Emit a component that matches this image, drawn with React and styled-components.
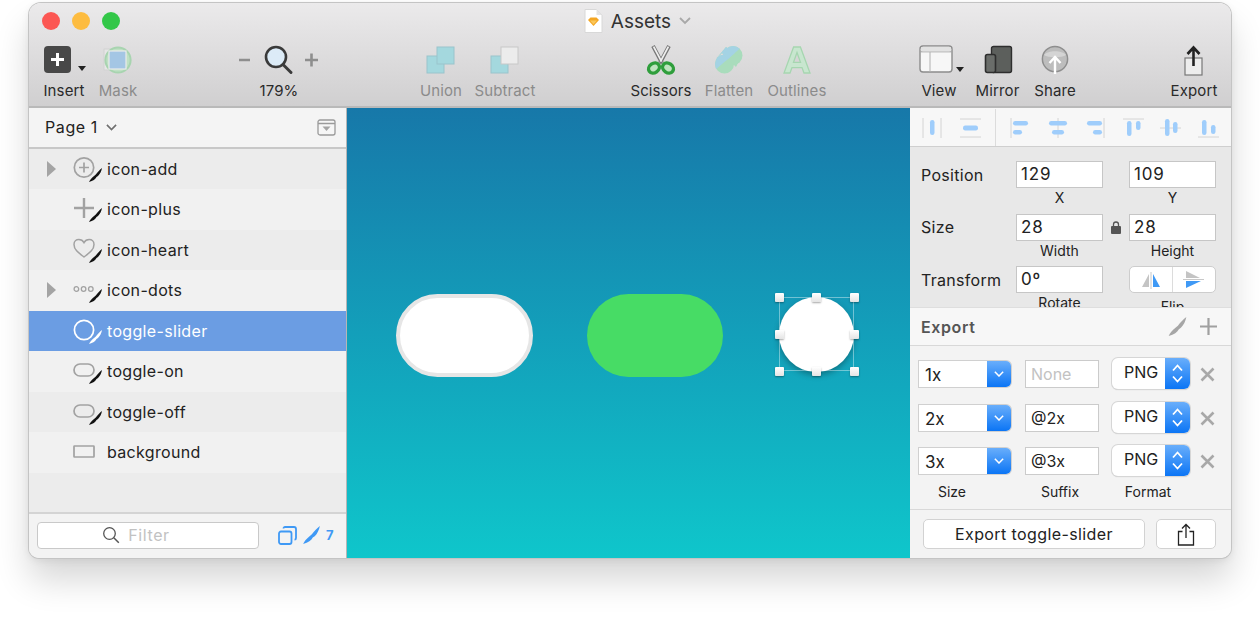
import React from 'react';
import styled, { createGlobalStyle } from 'styled-components';

const UI_FONT = `Inter, 'Noto Sans', 'Liberation Sans', sans-serif`;

const GlobalStyle = createGlobalStyle`
  html, body {
    margin: 0;
    background: #fff;
    font-family: ${UI_FONT};
    font-size: 15.5px;
    color: #222;
    overflow: hidden;
  }
  * { box-sizing: border-box; }
  svg { display: block; }
`;

const Knife = ({ x = 0, y = 0, color = '#111' }) => (
  <path
    transform={`translate(${x} ${y})`}
    fill={color}
    stroke="none"
    d="M13 0C12.500 3 11 6 9 8L7.500 9C6.500 11 4 13 0 14 1 12 2.500 10 5 8L6.800 6.500C8.500 4 11 1.500 13 0Z"
  />
);

const LayerIcon = ({ kind, selected }) => {
  const stroke = selected ? '#fff' : '#a2a2a2';
  return (
    <svg width="30" height="28" viewBox="0 0 30 28" fill="none" stroke={stroke}>
      {kind === 'add' && (
        <g strokeWidth="1.7">
          <circle cx="11" cy="12.500" r="9.700" />
          <path d="M11 7.500v10M6 12.500h10" />
        </g>
      )}
      {kind === 'plus' && <path strokeWidth="2.400" d="M11 3v20M1 13h20" />}
      {kind === 'heart' && (
        <path
          strokeWidth="1.500"
          d="M11 21C6 17.200 1 14 1 8.400 1 5.400 3.200 3.600 5.800 3.600 8 3.600 10 4.800 11 6.600 12 4.800 14 3.600 16.200 3.600 18.800 3.600 21 5.400 21 8.400 21 14 16 17.200 11 21Z"
        />
      )}
      {kind === 'dots' && (
        <g strokeWidth="1.300">
          <circle cx="3.400" cy="13" r="2.300" />
          <circle cx="10.600" cy="13" r="2.300" />
          <circle cx="17.800" cy="13" r="2.300" />
        </g>
      )}
      {kind === 'slider' && <circle strokeWidth="1.700" cx="11" cy="13" r="9.600" />}
      {kind === 'toggle' && <rect strokeWidth="1.700" x="1" y="7" width="20" height="12" rx="6" />}
      {kind === 'rect' && <rect strokeWidth="1.700" x="1" y="8" width="20" height="11" rx="0.500" />}
      {kind !== 'rect' && <Knife x={16} y={13} color={selected ? '#fff' : '#111'} />}
    </svg>
  );
};

const InsertIcon = () => (
  <svg width="44" height="30" viewBox="0 0 44 30">
    <rect x="2" y="1" width="27" height="27" rx="4" fill="#484848" />
    <path d="M15.500 8v13M9 14.500h13" stroke="#fff" strokeWidth="3" />
    <path d="M36 21h8l-4 5z" fill="#222" />
  </svg>
);

const MaskIcon = () => (
  <svg width="30" height="30" viewBox="0 0 30 30">
    <rect x="1" y="4" width="21" height="21" fill="#e6e6e6" stroke="#d2d2d2" />
    <circle cx="15" cy="15" r="12.600" fill="#bfe0c4" stroke="#a8d4b0" strokeWidth="2" />
    <rect x="6" y="6" width="17" height="18" fill="#a4c6e4" stroke="#ececec" strokeWidth="1.200" />
  </svg>
);

const ZoomIcon = () => (
  <svg width="80" height="30" viewBox="0 0 80 30">
    <path d="M1 15h11M67 15h13M73.500 8.500v13" stroke="#8e8e8e" strokeWidth="2.600" transform="translate(-1 0)" />
    <circle cx="37" cy="12" r="10" fill="#dcebf7" stroke="#3a3a3a" strokeWidth="2.600" />
    <path d="M44 19.500l8 8" stroke="#3a3a3a" strokeWidth="3" strokeLinecap="round" />
  </svg>
);

const UnionIcon = ({ subtract }) => (
  <svg width="30" height="30" viewBox="0 0 30 30">
    <rect x="1" y="11" width="17" height="17" fill="#a4d8de" stroke="#9ac4cc" />
    <rect
      x="11"
      y="2"
      width="17"
      height="17"
      fill={subtract ? '#ececec' : '#a4d8de'}
      stroke={subtract ? '#c8c8c8' : '#9ac4cc'}
    />
  </svg>
);

const ScissorsIcon = () => (
  <svg width="30" height="30" viewBox="0 0 30 30" fill="none">
    <path d="M7 1l9 17M23 1l-9 17" stroke="#777" strokeWidth="3.800" />
    <path d="M7.600 1.600l8 15M22.400 1.600l-8 15" stroke="#eee" strokeWidth="1.800" />
    <ellipse cx="8" cy="23" rx="5.800" ry="4.600" stroke="#2f9e3c" strokeWidth="3.400" fill="#bfe3bf" transform="rotate(-35 8 23)" />
    <ellipse cx="22" cy="23" rx="5.800" ry="4.600" stroke="#2f9e3c" strokeWidth="3.400" fill="#bfe3bf" transform="rotate(35 22 23)" />
  </svg>
);

const FlattenIcon = () => (
  <svg width="30" height="30" viewBox="0 0 30 30">
    <defs>
      <clipPath id="flatten-top">
        <path d="M0 0h30L0 26Z" />
      </clipPath>
    </defs>
    <g fill="#a9dcbc">
      <circle cx="19" cy="10.500" r="9.500" />
      <circle cx="10.500" cy="19" r="9.500" />
      <path d="M8 8l14 14 5-10L12 2 2 14Z" />
    </g>
    <g fill="#a4d3e4" clipPath="url(#flatten-top)">
      <circle cx="19" cy="10.500" r="9.500" />
      <circle cx="10.500" cy="19" r="9.500" />
      <path d="M8 8l14 14 5-10L12 2 2 14Z" />
    </g>
  </svg>
);

const OutlinesIcon = () => (
  <svg width="30" height="30" viewBox="0 0 30 30" fill="#c8e6cf" stroke="#a6d6b0" strokeWidth="1.300">
    <path d="M11.600 2h6.800L28 28h-6l-2-5.400H10L8 28H2Z" />
    <path d="M11.500 17.400h7L15 7.500Z" fill="#d6d5d6" />
  </svg>
);

const ViewIcon = () => (
  <svg width="50" height="30" viewBox="0 0 50 30">
    <rect x="6" y="1" width="32" height="26" rx="3" fill="#f7f7f7" stroke="#8c8c8c" strokeWidth="1.400" />
    <path d="M6.500 6.800h31" stroke="#999" />
    <path d="M16 7v20" stroke="#b0b0b0" />
    <rect x="6.800" y="1.800" width="30.400" height="4.600" rx="2" fill="#e2e2e2" />
    <path d="M42 22h8l-4 5z" fill="#222" />
  </svg>
);

const MirrorIcon = () => (
  <svg width="30" height="30" viewBox="0 0 30 30">
    <rect x="8.500" y="1.500" width="20" height="26" rx="2" fill="#5c5f5c" stroke="#2e2e2e" strokeWidth="1.400" />
    <rect x="2.500" y="9.500" width="10" height="18" rx="2" fill="#6a6d6a" stroke="#2e2e2e" strokeWidth="1.600" />
  </svg>
);

const ShareIcon = () => (
  <svg width="30" height="30" viewBox="0 0 30 30">
    <circle cx="15" cy="14" r="12.600" fill="#bdbdbd" stroke="#8e8e8e" strokeWidth="1.500" />
    <path d="M4 10c4-5 18-5 22 0-4 3-18 3-22 0Z" fill="#d4d4d4" />
    <path d="M15 29V13M9.500 18l5.500-6 5.500 6" stroke="#fff" strokeWidth="2.400" fill="none" />
  </svg>
);

const ExportIcon = () => (
  <svg width="30" height="32" viewBox="0 0 30 32">
    <rect x="6" y="13" width="17" height="17" fill="#ededed" stroke="#777" strokeWidth="1.200" />
    <path d="M14.500 21V3M8.500 9l6-6.500 6 6.500" stroke="#222" strokeWidth="2.600" fill="none" />
  </svg>
);

const DocIcon = () => (
  <svg width="19" height="24" viewBox="0 0 19 24">
    <path d="M1 .5h11.500L18 6v17.500H1Z" fill="#fff" stroke="#d8d8d8" />
    <path d="M12.500 .5V6H18Z" fill="#e4e4e4" />
    <path d="M4 11l2.500-2.500h6L15 11l-5.500 6Z" fill="#f4a623" />
    <path d="M6 11.500h7l-3.500 4Z" fill="#fac75a" />
  </svg>
);

const Chevron = ({ color = '#777', size = 12, weight = 1.800 }) => (
  <svg width={size} height={size * 0.6} viewBox="0 0 12 7.200" fill="none">
    <path d="M1 1l5 5 5-5" stroke={color} strokeWidth={weight} />
  </svg>
);

const ALIGN_ICONS = [
  { lines: ['M1 1v20', 'M19 1v20'], pills: [[8, 3, 4.500, 15]] },
  { lines: ['M0 2h21', 'M0 20h21'], pills: [[3, 8.500, 15, 5]] },
  { lines: ['M1 1v20'], pills: [[3, 4, 15, 4.500], [3, 13, 9, 4.500]] },
  { lines: ['M10 1v20'], pills: [[1, 4, 18, 4.500], [4, 13, 12, 4.500]] },
  { lines: ['M19 1v20'], pills: [[2, 4, 15, 4.500], [8, 13, 9, 4.500]] },
  { lines: ['M0 2h21'], pills: [[4, 4, 4.500, 15], [13, 4, 4.500, 9]] },
  { lines: ['M0 11h21'], pills: [[5, 2, 4.500, 17], [13, 5, 4.500, 11]] },
  { lines: ['M0 20h21'], pills: [[4, 3, 4.500, 15], [13, 8, 4.500, 9]] },
];

const AlignIcon = ({ lines, pills }) => (
  <svg width="21" height="22" viewBox="0 0 21 22">
    {lines.map((d) => (
      <path key={d} d={d} stroke="#d4d4d4" strokeWidth="1" fill="none" />
    ))}
    {pills.map(([x, y, w, h]) => (
      <rect key={`${x}-${y}`} x={x} y={y} width={w} height={h} rx="2.200" fill="#9fcdfb" />
    ))}
  </svg>
);

const LAYERS = [
  { name: 'icon-add', icon: 'add', open: true },
  { name: 'icon-plus', icon: 'plus' },
  { name: 'icon-heart', icon: 'heart' },
  { name: 'icon-dots', icon: 'dots', open: true },
  { name: 'toggle-slider', icon: 'slider', selected: true },
  { name: 'toggle-on', icon: 'toggle' },
  { name: 'toggle-off', icon: 'toggle' },
  { name: 'background', icon: 'rect' },
];

const EXPORTS = [
  { size: '1x', suffix: 'None', empty: true },
  { size: '2x', suffix: '@2x' },
  { size: '3x', suffix: '@3x' },
];

const HANDLES = [
  [0, 0], [37, 0], [75, 0],
  [0, 37], [75, 37],
  [0, 74], [37, 74], [75, 74],
];

function Tool({ width, label, dim, icon }) {
  return (
    <ToolItem $width={width}>
      <ToolIcon>{icon}</ToolIcon>
      <ToolLabel $dim={dim}>{label}</ToolLabel>
    </ToolItem>
  );
}

export default function App() {
  return (
    <Page>
      <GlobalStyle />
      <Window>
        <Toolbar>
          <TitleBar>
            <Lights>
              <Light $color="#fc5753" />
              <Light $color="#fdbc40" />
              <Light $color="#33c748" />
            </Lights>
            <Title>
              <DocIcon />
              <TitleText>Assets</TitleText>
              <Chevron color="#a8a8a8" />
            </Title>
          </TitleBar>
          <Tools>
            <ToolGroup $left={8}>
              <Tool width={54} label="Insert" icon={<InsertIcon />} />
              <Tool width={54} label="Mask" dim icon={<MaskIcon />} />
            </ToolGroup>
            <ToolGroup $left={94}>
              <Tool width={80} label="179%" icon={<ZoomIcon />} />
            </ToolGroup>
            <ToolGroup $left={90}>
              <Tool width={64} label="Union" dim icon={<UnionIcon />} />
              <Tool width={64} label="Subtract" dim icon={<UnionIcon subtract />} />
            </ToolGroup>
            <ToolGroup $left={90}>
              <Tool width={68} label="Scissors" icon={<ScissorsIcon />} />
              <Tool width={68} label="Flatten" dim icon={<FlattenIcon />} />
              <Tool width={68} label="Outlines" dim icon={<OutlinesIcon />} />
            </ToolGroup>
            <ToolGroup $left={79}>
              <Tool width={58} label="View" icon={<ViewIcon />} />
              <Tool width={59} label="Mirror" icon={<MirrorIcon />} />
              <Tool width={56} label="Share" icon={<ShareIcon />} />
            </ToolGroup>
            <ToolGroup $left={79}>
              <Tool width={64} label="Export" icon={<ExportIcon />} />
            </ToolGroup>
          </Tools>
        </Toolbar>

        <Body>
          <LeftPanel>
            <PageHeader>
              <PageName>Page 1</PageName>
              <Chevron color="#6f6f6f" size={11} />
              <PageToggle>
                <svg width="19" height="17" viewBox="0 0 19 17">
                  <rect x="1" y="1" width="17" height="15" rx="2" fill="#f6f6f6" stroke="#9a9a9a" strokeWidth="1.300" />
                  <path d="M1 4.500h17" stroke="#9a9a9a" strokeWidth="1.600" />
                  <path d="M5.500 7.500h8l-4 4.500z" fill="#a4a4a4" />
                </svg>
              </PageToggle>
            </PageHeader>
            <LayerList>
              {LAYERS.map((layer) => (
                <LayerRow key={layer.name} $selected={layer.selected}>
                  <Disclosure $show={layer.open} />
                  <LayerIcon kind={layer.icon} selected={layer.selected} />
                  <span>{layer.name}</span>
                </LayerRow>
              ))}
            </LayerList>
            <FilterBar>
              <FilterInput>
                <svg width="18" height="18" viewBox="0 0 18 18" fill="none">
                  <circle cx="7.500" cy="7.500" r="5.800" stroke="#555" strokeWidth="1.300" />
                  <path d="M11.800 11.800l5 5" stroke="#555" strokeWidth="1.500" />
                </svg>
                <span>Filter</span>
              </FilterInput>
              <FilterIcons>
                <svg width="19" height="19" viewBox="0 0 19 19" fill="none" stroke="#3f99f5" strokeWidth="1.800">
                  <rect x="1" y="5.500" width="12.500" height="12.500" rx="2" />
                  <path d="M5.500 2.500C5.500 1.500 6.200 1 7 1h9c1 0 2 .8 2 2v9c0 1-.6 1.600-1.500 1.600" />
                </svg>
                <svg width="19" height="18" viewBox="0 0 13 14">
                  <Knife color="#3f99f5" />
                </svg>
                <CountText>7</CountText>
              </FilterIcons>
            </FilterBar>
          </LeftPanel>

          <Canvas>
            <ToggleOff />
            <ToggleOn />
            <Knob />
            <Selection>
              {HANDLES.map(([x, y]) => (
                <Handle key={`${x}-${y}`} style={{ left: x, top: y }} />
              ))}
            </Selection>
          </Canvas>

          <RightPanel>
            <AlignBar>
              <AlignGroup $width={85} $gap={17}>
                {ALIGN_ICONS.slice(0, 2).map((icon) => (
                  <AlignIcon key={icon.lines[0]} {...icon} />
                ))}
              </AlignGroup>
              <AlignGroup $width={235} $gap={16.500} $divided>
                {ALIGN_ICONS.slice(2).map((icon) => (
                  <AlignIcon key={icon.lines[0]} {...icon} />
                ))}
              </AlignGroup>
            </AlignBar>

            <Props>
              <PropRow>
                <PropLabel>Position</PropLabel>
                <ValueInput>129</ValueInput>
                <span />
                <ValueInput>109</ValueInput>
                <span />
                <Caption>X</Caption>
                <span />
                <Caption>Y</Caption>
              </PropRow>
              <PropRow>
                <PropLabel>Size</PropLabel>
                <ValueInput>28</ValueInput>
                <LockCell>
                  <svg width="10" height="13" viewBox="0 0 10 13">
                    <rect x="0" y="5" width="10" height="8" rx="1" fill="#555" />
                    <path d="M2.500 5.500V3.500a2.500 2.500 0 0 1 5 0v2" stroke="#555" strokeWidth="1.300" fill="none" />
                  </svg>
                </LockCell>
                <ValueInput>28</ValueInput>
                <span />
                <Caption>Width</Caption>
                <span />
                <Caption>Height</Caption>
              </PropRow>
              <PropRow>
                <PropLabel>Transform</PropLabel>
                <ValueInput>0º</ValueInput>
                <span />
                <FlipControl>
                  <FlipHalf>
                    <svg width="22" height="18" viewBox="0 0 22 18">
                      <path d="M9 3v13L2 16Z" fill="#c4c4c4" />
                      <path d="M11 1v17" stroke="#c8c8c8" />
                      <path d="M13 3v13h7Z" fill="#3f99f5" />
                    </svg>
                  </FlipHalf>
                  <FlipHalf>
                    <svg width="22" height="18" viewBox="0 0 22 18">
                      <path d="M3 0v7h14Z" fill="#c4c4c4" />
                      <path d="M0 8.500h21" stroke="#c8c8c8" />
                      <path d="M3 17v-7h15Z" fill="#3f99f5" />
                    </svg>
                  </FlipHalf>
                </FlipControl>
                <span />
                <Caption>Rotate</Caption>
                <span />
                <Caption $low>Flip</Caption>
              </PropRow>
            </Props>

            <ExportHeader>
              <ExportTitle>Export</ExportTitle>
              <svg width="19" height="19" viewBox="0 0 13 14">
                <Knife color="#a6a6a6" />
              </svg>
              <svg width="17" height="17" viewBox="0 0 17 17">
                <path d="M8.500 0v17M0 8.500h17" stroke="#a0a0a0" strokeWidth="2.200" />
              </svg>
            </ExportHeader>

            <ExportList>
              {EXPORTS.map((row) => (
                <ExportRow key={row.size}>
                  <SizeSelect>
                    <span>{row.size}</span>
                    <BlueCap $width={24}>
                      <Chevron color="#fff" size={10} />
                    </BlueCap>
                  </SizeSelect>
                  <SuffixInput $empty={row.empty}>{row.suffix}</SuffixInput>
                  <FormatSelect>
                    <span>PNG</span>
                    <BlueCap $width={25}>
                      <svg width="13" height="21" viewBox="0 0 13 21" fill="none" stroke="#fff" strokeWidth="1.800">
                        <path d="M2 7.500l4.500-5 4.500 5M2 13.500l4.500 5 4.500-5" />
                      </svg>
                    </BlueCap>
                  </FormatSelect>
                  <svg width="15" height="15" viewBox="0 0 15 15">
                    <path d="M1.500 1.500l12 12M13.500 1.500l-12 12" stroke="#a8a8a8" strokeWidth="2.600" />
                  </svg>
                </ExportRow>
              ))}
              <ExportCaptions>
                <ExportCaption $width={68}>Size</ExportCaption>
                <ExportCaption $width={108} $left={20}>Suffix</ExportCaption>
                <ExportCaption $width={68}>Format</ExportCaption>
              </ExportCaptions>
            </ExportList>

            <ExportFooter>
              <ExportButton>Export toggle-slider</ExportButton>
              <ShareButton>
                <svg width="18" height="23" viewBox="0 0 18 23" fill="none" stroke="#222" strokeWidth="1.300">
                  <path d="M5.500 8.500H1.500v13.500h15V8.500h-4" />
                  <path d="M9 15V1.500M5 5.500l4-4 4 4" />
                </svg>
              </ShareButton>
            </ExportFooter>
          </RightPanel>
        </Body>
      </Window>
    </Page>
  );
}

const Page = styled.div`
  width: 1260px;
  height: 618px;
  padding: 3px 29px 0;
`;

const Window = styled.div`
  width: 1202px;
  height: 555px;
  display: flex;
  flex-direction: column;
  border-radius: 12px 12px 10px 10px;
  overflow: hidden;
  box-shadow: 0 0 0 1px #c4c4c4, 0 22px 34px rgba(0, 0, 0, 0.16), 0 2px 8px rgba(0, 0, 0, 0.08);
`;

const Toolbar = styled.header`
  height: 105px;
  flex: none;
  background: linear-gradient(#ebeaeb, #d0cfd0);
  border-bottom: 2px solid #b9b9b9;
`;

const TitleBar = styled.div`
  position: relative;
  height: 36px;
  display: flex;
  align-items: center;
  justify-content: center;
`;

const Lights = styled.div`
  position: absolute;
  left: 13px;
  top: 9px;
  display: flex;
  gap: 12px;
`;

const Light = styled.span`
  width: 18px;
  height: 18px;
  border-radius: 50%;
  background: ${(p) => p.$color};
`;

const Title = styled.div`
  display: flex;
  align-items: center;
  gap: 8px;
  margin-left: 15px;
`;

const TitleText = styled.span`
  font-size: 19px;
  color: #333;
`;

const Tools = styled.div`
  display: flex;
  align-items: flex-start;
`;

const ToolGroup = styled.div`
  display: flex;
  margin-left: ${(p) => p.$left}px;
`;

const ToolItem = styled.div`
  width: ${(p) => p.$width}px;
  display: flex;
  flex-direction: column;
  align-items: center;
`;

const ToolIcon = styled.div`
  height: 41px;
  padding-top: 6px;
  display: flex;
  justify-content: center;
`;

const ToolLabel = styled.div`
  font-size: 15px;
  line-height: 22px;
  letter-spacing: 0.12px;
  white-space: nowrap;
  color: ${(p) => (p.$dim ? '#8b8b8b' : '#2a2a2a')};
`;

const Body = styled.div`
  flex: 1;
  display: flex;
  min-height: 0;
`;

const LeftPanel = styled.aside`
  width: 318px;
  flex: none;
  display: flex;
  flex-direction: column;
  background: #ececec;
  border-right: 1px solid #b6b6b6;
`;

const PageHeader = styled.div`
  height: 40.500px;
  flex: none;
  display: flex;
  align-items: center;
  gap: 8px;
  padding: 0 10px 0 16px;
  background: #f4f4f4;
  border-bottom: 2px solid #c8c8c8;
`;

const PageName = styled.span`
  font-size: 16px;
  letter-spacing: 0.6px;
  color: #222;
`;

const PageToggle = styled.div`
  margin-left: auto;
`;

const LayerList = styled.div`
  flex: 1;
`;

const LayerRow = styled.div`
  height: 40.500px;
  display: grid;
  grid-template-columns: 44px 34px 1fr;
  align-items: center;
  font-size: 16px;
  letter-spacing: 0.33px;
  color: ${(p) => (p.$selected ? '#fff' : '#222')};
  background: ${(p) => (p.$selected ? '#6b9de3' : '#f1f1f1')};

  &:nth-child(odd) {
    background: ${(p) => (p.$selected ? '#6b9de3' : '#ececec')};
  }
`;

const Disclosure = styled.span`
  display: ${(p) => (p.$show ? 'block' : 'none')};
  justify-self: start;
  grid-column: 1;
  width: 0;
  height: 0;
  margin-left: 18px;
  border-left: 9px solid #a4a4a4;
  border-top: 8.500px solid transparent;
  border-bottom: 8.500px solid transparent;

  & + svg {
    grid-column: 2;
  }
`;

const FilterBar = styled.div`
  height: 46px;
  flex: none;
  display: flex;
  align-items: center;
  padding: 0 0 2px 8px;
  background: #f3f3f3;
  border-top: 2px solid #d4d4d4;
`;

const FilterInput = styled.div`
  width: 222px;
  height: 27px;
  flex: none;
  display: flex;
  align-items: center;
  justify-content: center;
  gap: 8px;
  padding-right: 24px;
  background: #fff;
  border: 1px solid #c9c9c9;
  border-radius: 4px;
  color: #c2c2c2;
  font-size: 16px;
  letter-spacing: 0.6px;
`;

const FilterIcons = styled.div`
  display: flex;
  align-items: center;
  gap: 5px;
  margin-left: 19px;
`;

const CountText = styled.span`
  font-size: 13px;
  font-weight: 700;
  color: #3f99f5;
`;

const Canvas = styled.main`
  position: relative;
  width: 563px;
  flex: none;
  background: linear-gradient(#1778a9, #0fc6cb);
`;

const ToggleOff = styled.div`
  position: absolute;
  left: 49px;
  top: 186px;
  width: 137px;
  height: 83px;
  border-radius: 42px;
  background: #fff;
  border: 4px solid #e6e6e6;
`;

const ToggleOn = styled.div`
  position: absolute;
  left: 240px;
  top: 186px;
  width: 136px;
  height: 83px;
  border-radius: 42px;
  background: #47dc65;
`;

const Knob = styled.div`
  position: absolute;
  left: 432px;
  top: 189px;
  width: 75px;
  height: 75px;
  border-radius: 50%;
  background: #fff;
  box-shadow: 0 3px 6px rgba(0, 0, 0, 0.3);
`;

const Selection = styled.div`
  position: absolute;
  left: 432px;
  top: 189px;
  width: 75px;
  height: 74px;
  border: 1px solid rgba(255, 255, 255, 0.4);
`;

const Handle = styled.span`
  position: absolute;
  width: 9px;
  height: 9px;
  margin: -5px 0 0 -5px;
  background: linear-gradient(#fff, #e4e4e4);
  border-radius: 1px;
  box-shadow: 0 1px 2px rgba(0, 0, 0, 0.35);
`;

const RightPanel = styled.aside`
  flex: 1;
  display: flex;
  flex-direction: column;
  background: #f3f3f3;
  min-width: 0;
`;

const AlignBar = styled.div`
  height: 39px;
  flex: none;
  display: flex;
  padding-top: 1px;
  background: #f7f7f7;
  border-bottom: 1px solid #cfcfcf;
`;

const AlignGroup = styled.div`
  width: ${(p) => p.$width}px;
  display: flex;
  align-items: center;
  gap: ${(p) => p.$gap}px;
  padding-left: ${(p) => (p.$divided ? 14 : 12)}px;
  ${(p) => p.$divided && 'border-left: 1px solid #dcdcdc;'}
`;

const Props = styled.section`
  height: 161px;
  flex: none;
  overflow: hidden;
  padding: 14px 0 0 11px;
  background: #e8e8e8;
  border-bottom: 1px solid #dedede;
`;

const PropRow = styled.div`
  display: grid;
  grid-template-columns: 95px 87px 26px 87px;
  grid-template-rows: 27px 25.500px;
  align-items: center;
`;

const PropLabel = styled.div`
  font-size: 16px;
  letter-spacing: 0.3px;
  color: #222;
`;

const ValueInput = styled.div`
  height: 27px;
  line-height: 25px;
  padding-left: 4px;
  font-size: 17px;
  letter-spacing: 0.8px;
  color: #222;
  background: #fff;
  border: 1px solid #c6c6c6;
`;

const Caption = styled.div`
  align-self: start;
  margin-top: ${(p) => (p.$low ? 4 : 0)}px;
  font-size: 14px;
  line-height: 20px;
  text-align: center;
  color: #222;
`;

const LockCell = styled.div`
  display: flex;
  justify-content: center;
`;

const FlipControl = styled.div`
  height: 27px;
  display: flex;
  background: #fff;
  border: 1px solid #cdcdcd;
  border-radius: 5px;
`;

const FlipHalf = styled.div`
  flex: 1;
  display: flex;
  align-items: center;
  justify-content: center;

  & + & {
    border-left: 1px solid #dcdcdc;
  }
`;

const ExportHeader = styled.div`
  height: 38px;
  flex: none;
  display: flex;
  align-items: center;
  gap: 13px;
  padding: 0 14px 0 11px;
  background: #f7f7f7;
  border-bottom: 1px solid #d8d8d8;
`;

const ExportTitle = styled.span`
  margin-right: auto;
  font-size: 16px;
  font-weight: 600;
  letter-spacing: 0.6px;
  color: #555;
`;

const ExportList = styled.div`
  height: 164px;
  flex: none;
  padding: 12px 0 0 8px;
  border-bottom: 1px solid #d8d8d8;
`;

const ExportRow = styled.div`
  height: 43.500px;
  display: grid;
  grid-template-columns: 94px 74px 78px 15px;
  column-gap: 13px;
  align-items: start;

  & > svg {
    margin-top: 9px;
    margin-left: -3px;
  }
`;

const SizeSelect = styled.div`
  height: 26px;
  margin: 3px 1px 0;
  display: flex;
  justify-content: space-between;
  font-size: 17px;
  line-height: 29px;
  padding-left: 6px;
  color: #222;
  background: #fff;
  border-radius: 0 5px 5px 0;
  box-shadow: 0 0 0 1px #d0d0d0;
  overflow: hidden;
`;

const BlueCap = styled.div`
  width: ${(p) => p.$width}px;
  height: 100%;
  flex: none;
  display: flex;
  align-items: center;
  justify-content: center;
  background: linear-gradient(#69aefb, #0b75f5);
`;

const SuffixInput = styled.div`
  height: 28px;
  margin-top: 2px;
  padding-left: 5px;
  line-height: 27px;
  font-size: 16px;
  color: ${(p) => (p.$empty ? '#c2c2c2' : '#222')};
  background: #fff;
  border: 1px solid #cbcbcb;
`;

const FormatSelect = styled.div`
  height: 31px;
  display: flex;
  justify-content: space-between;
  padding-left: 12px;
  line-height: 29px;
  font-size: 16px;
  color: #222;
  background: #fff;
  border-radius: 6px;
  box-shadow: 0 0 0 1px #d6d6d6, 0 1px 1px #c0c0c0;
  overflow: hidden;
`;

const ExportCaptions = styled.div`
  display: flex;
  margin-top: -8px;
`;

const ExportCaption = styled.div`
  width: ${(p) => p.$width}px;
  margin-left: ${(p) => p.$left || 0}px;
  font-size: 14px;
  line-height: 22px;
  text-align: center;
  color: #222;
`;

const ExportFooter = styled.div`
  flex: 1;
  display: flex;
  align-items: center;
  gap: 11px;
  padding: 0 0 0 13px;
`;

const ExportButton = styled.div`
  width: 222px;
  height: 30px;
  line-height: 28px;
  text-align: center;
  font-size: 16px;
  letter-spacing: 0.4px;
  color: #222;
  background: #fff;
  border: 1px solid #d2d2d2;
  border-radius: 5px;
`;

const ShareButton = styled.div`
  width: 60px;
  height: 30px;
  display: flex;
  align-items: center;
  justify-content: center;
  background: #fff;
  border: 1px solid #d2d2d2;
  border-radius: 5px;
`;
